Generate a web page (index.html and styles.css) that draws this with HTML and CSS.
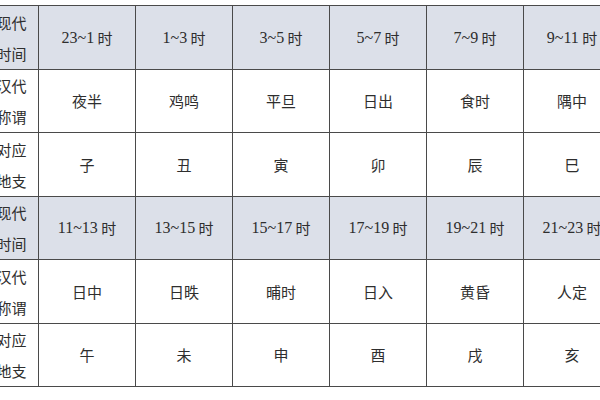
FILE: index.html
```html
<!DOCTYPE html>
<html lang="zh">
<head>
<meta charset="utf-8">
<title>十二时辰</title>
<link rel="stylesheet" href="styles.css">
</head>
<body>
<div class="table">
  <div class="cell head label">现代<br>时间</div>
  <div class="cell head"><span class="num">23~1</span>&nbsp;时</div>
  <div class="cell head"><span class="num">1~3</span>&nbsp;时</div>
  <div class="cell head"><span class="num">3~5</span>&nbsp;时</div>
  <div class="cell head"><span class="num">5~7</span>&nbsp;时</div>
  <div class="cell head"><span class="num">7~9</span>&nbsp;时</div>
  <div class="cell head"><span class="num">9~11</span>&nbsp;时</div>

  <div class="cell label">汉代<br>称谓</div>
  <div class="cell">夜半</div>
  <div class="cell">鸡鸣</div>
  <div class="cell">平旦</div>
  <div class="cell">日出</div>
  <div class="cell">食时</div>
  <div class="cell">隅中</div>

  <div class="cell label">对应<br>地支</div>
  <div class="cell">子</div>
  <div class="cell">丑</div>
  <div class="cell">寅</div>
  <div class="cell">卯</div>
  <div class="cell">辰</div>
  <div class="cell">巳</div>

  <div class="cell head label">现代<br>时间</div>
  <div class="cell head"><span class="num">11~13</span>&nbsp;时</div>
  <div class="cell head"><span class="num">13~15</span>&nbsp;时</div>
  <div class="cell head"><span class="num">15~17</span>&nbsp;时</div>
  <div class="cell head"><span class="num">17~19</span>&nbsp;时</div>
  <div class="cell head"><span class="num">19~21</span>&nbsp;时</div>
  <div class="cell head"><span class="num">21~23</span>&nbsp;时</div>

  <div class="cell label">汉代<br>称谓</div>
  <div class="cell">日中</div>
  <div class="cell">日昳</div>
  <div class="cell">晡时</div>
  <div class="cell">日入</div>
  <div class="cell">黄昏</div>
  <div class="cell">人定</div>

  <div class="cell label">对应<br>地支</div>
  <div class="cell">午</div>
  <div class="cell">未</div>
  <div class="cell">申</div>
  <div class="cell">酉</div>
  <div class="cell">戌</div>
  <div class="cell">亥</div>
</div>
</body>
</html>
```

FILE: styles.css
```css
html, body {
  margin: 0;
  padding: 0;
  overflow: hidden;
  background: #ffffff;
}

body {
  width: 600px;
  height: 400px;
}

.table {
  display: grid;
  grid-template-columns: 53px repeat(6, 96px);
  grid-template-rows: 63px 62px 63px 62px 63px 62px;
  gap: 1px;
  padding: 1px;
  width: max-content;
  margin: 5px 0 0 -16px;
  background: #4a4a4a;
  font-family: "Liberation Serif", "Noto Sans CJK SC", serif;
  font-size: 15px;
  color: #2e2e2e;
}

.cell {
  background: #ffffff;
  display: flex;
  align-items: center;
  justify-content: center;
  text-align: center;
  font-family: "Noto Sans CJK SC", sans-serif;
  line-height: 20px;
}

.cell.head {
  background: #dce0e9;
}

.label {
  line-height: 31px;
}

.num {
  font-family: "Liberation Serif", serif;
  font-size: 16px;
}
```
